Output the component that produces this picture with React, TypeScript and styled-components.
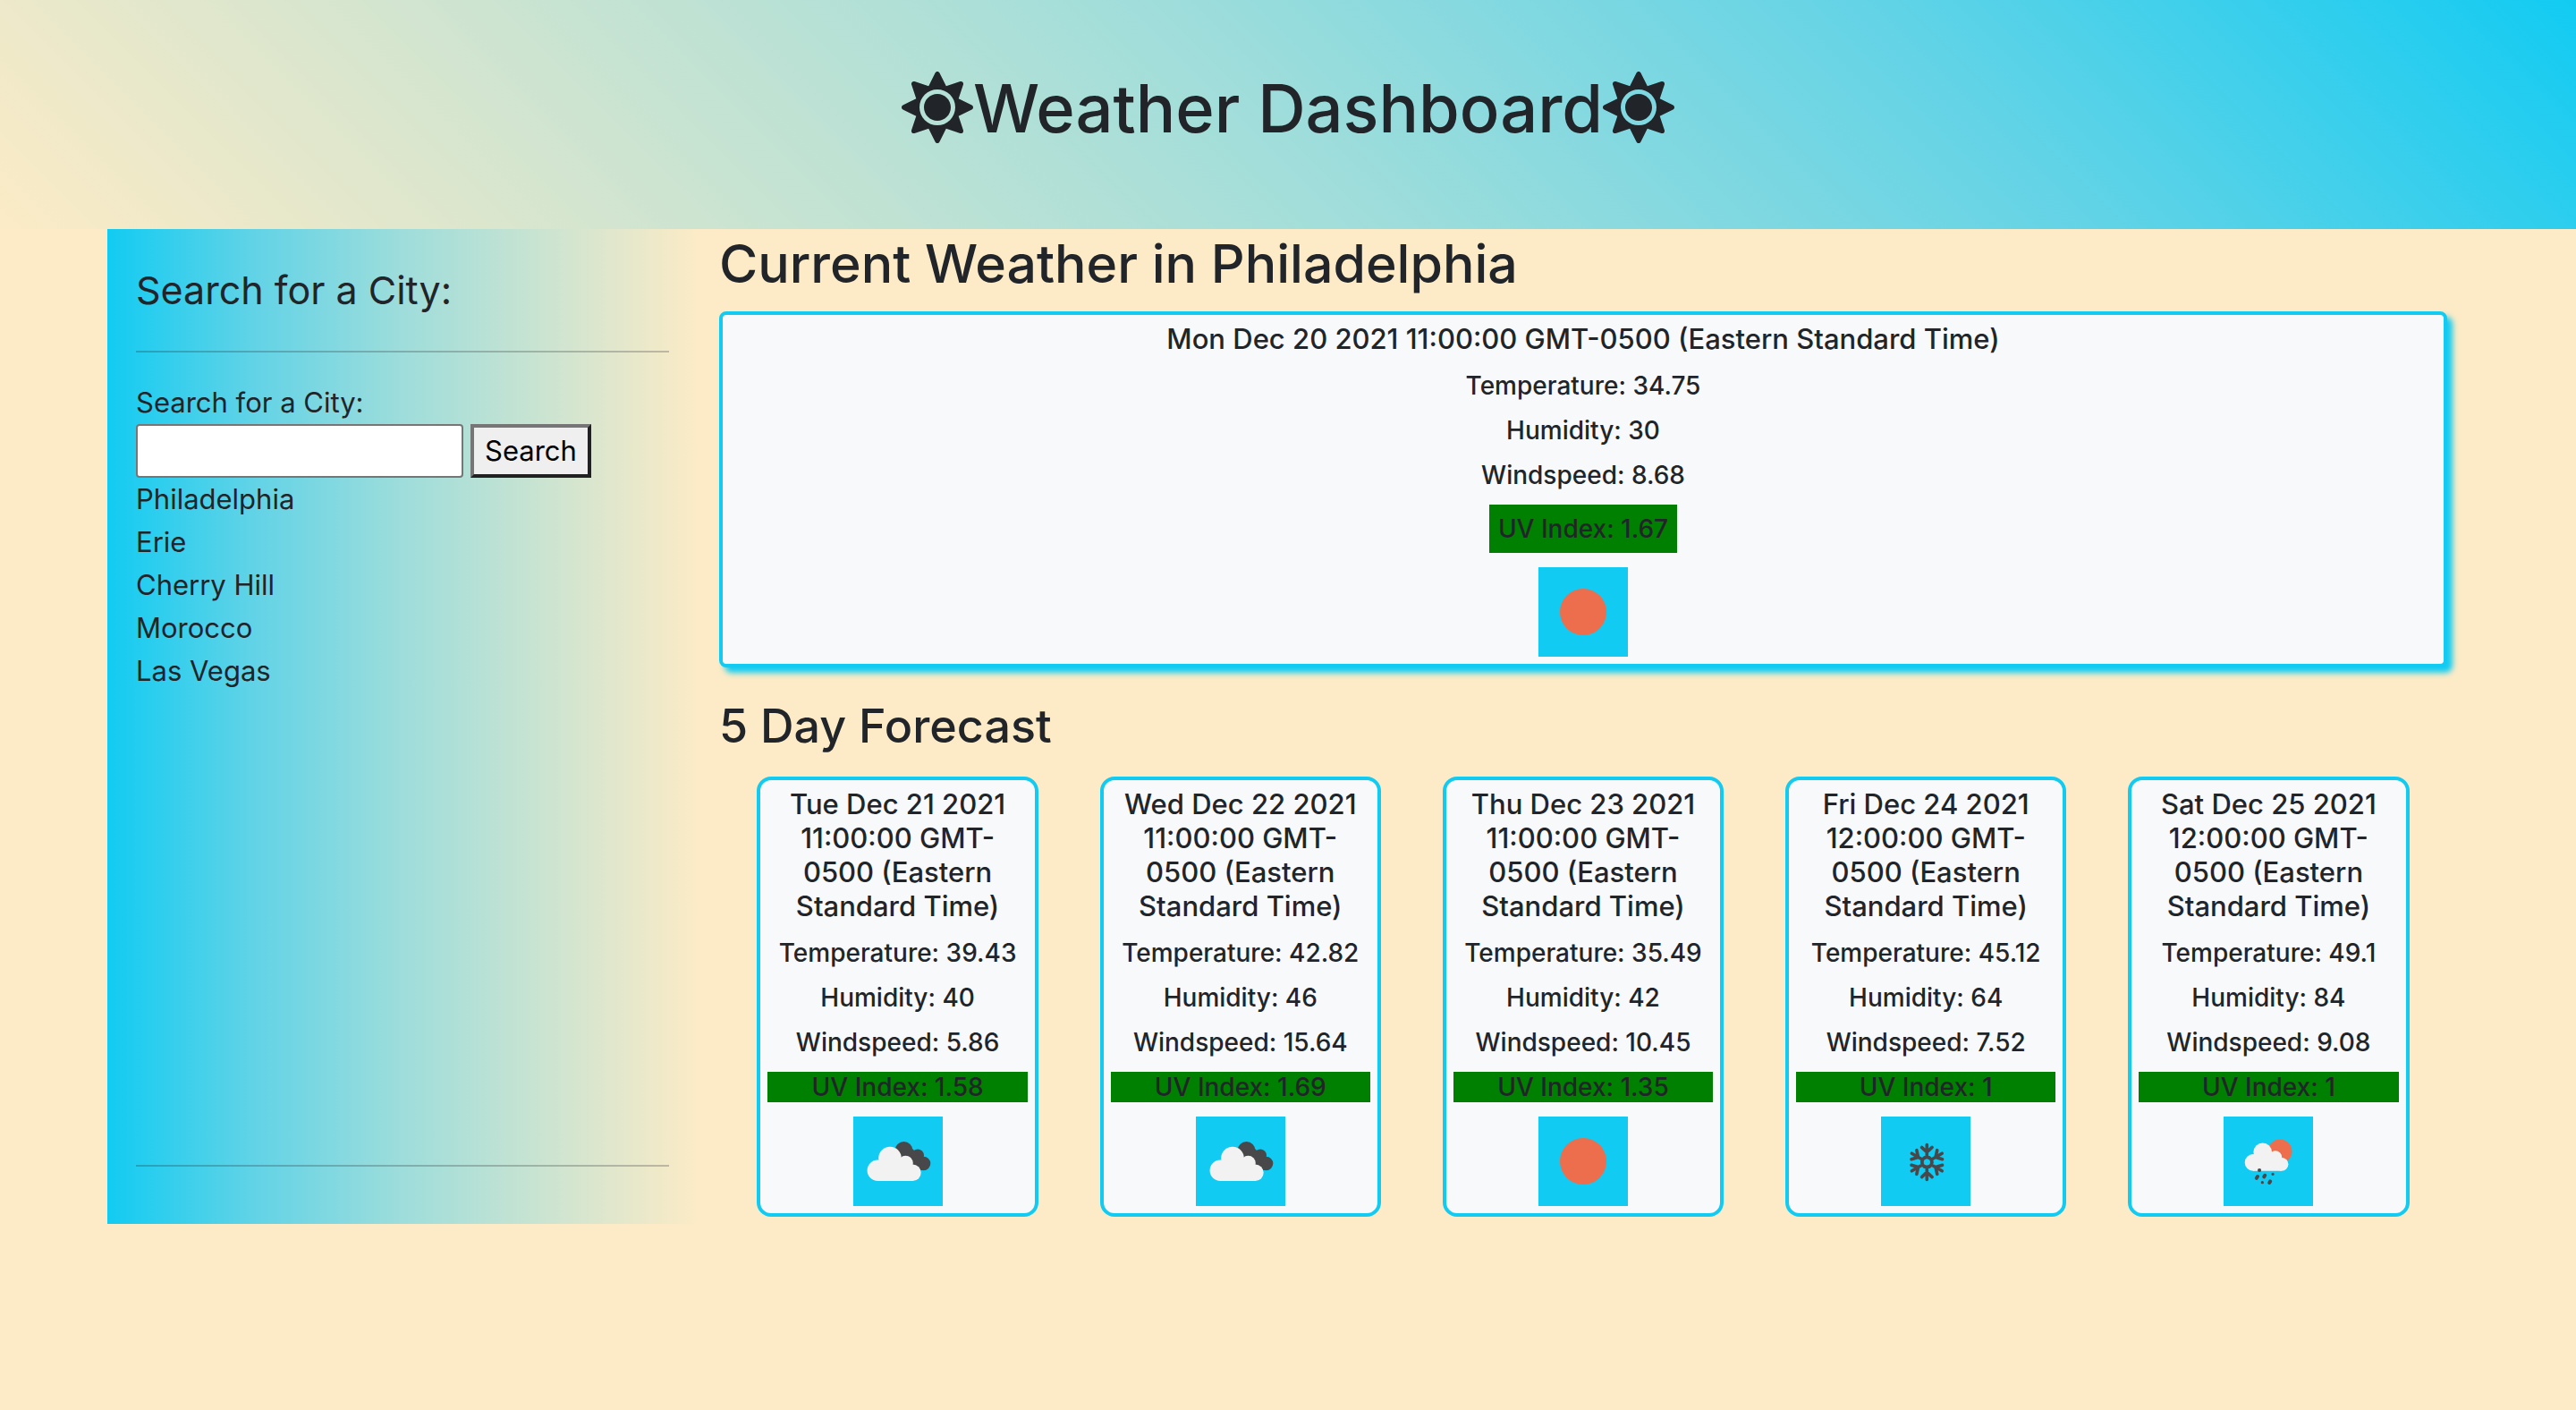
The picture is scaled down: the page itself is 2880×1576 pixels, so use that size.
import React from "react";
import styled, { createGlobalStyle } from "styled-components";
import { FaSun } from "react-icons/fa";

const color = {
  ink: "#212529",
  cyan: "#12cbf2",
  sand: "#fcebc6",
  panel: "#f8f9fb",
  cloud: "#f2f2f2",
  storm: "#48484a",
  sun: "#ec6e4c",
};

const GlobalStyle = createGlobalStyle`
  *, *::before, *::after { box-sizing: border-box; }
  body {
    margin: 0;
    background: ${color.sand};
    color: ${color.ink};
    font-family: Inter, "Liberation Sans", sans-serif;
    font-size: 31px;
    line-height: 48px;
  }
  h1, h2, h3, p, ul { margin: 0; padding: 0; font-weight: 500; }
`;

const Header = styled.header`
  padding: 72px 0 86px;
  background: linear-gradient(45deg, ${color.sand}, #9edddb 50%, #62d3e6 75%, ${color.cyan});
`;

const Title = styled.h1`
  display: flex;
  justify-content: center;
  font-size: 74px;
  line-height: 98px;

  svg { width: 80px; height: 80px; margin-top: 8px; }
`;

const Page = styled.main`
  display: grid;
  grid-template-columns: 1fr 3fr;
  max-width: 2640px;
  margin: 0 auto;
`;

const Sidebar = styled.aside`
  display: flex;
  flex-direction: column;
  padding: 32px;
  background: linear-gradient(to right, ${color.cyan}, #62d3e6 25%, #9edddb 50%, ${color.sand});
`;

const SidebarTitle = styled.h2`
  font-size: 43px;
  line-height: 72px;
  font-weight: 400;
`;

const Rule = styled.hr`
  width: 100%;
  height: 2px;
  margin: 32px 0;
  border: 0;
  background: ${color.ink};
  opacity: 0.25;
`;

const SearchForm = styled.form`
  display: flex;
  flex-wrap: wrap;
  column-gap: 8px;
`;

const SearchLabel = styled.label`
  flex: 0 0 100%;
`;

const SearchInput = styled.input`
  width: 366px;
  height: 60px;
  padding: 4px 8px;
  border: 2px solid #767676;
  border-radius: 4px;
  background: #fff;
  font: inherit;
`;

const SearchButton = styled.button`
  height: 60px;
  padding: 0 12px;
  border: 4px solid;
  border-color: #767676 #212121 #212121 #767676;
  background: #efefef;
  color: #000;
  font: inherit;
`;

const CityList = styled.ul`
  flex: 1;
  list-style: none;
  font-weight: 400;
`;

const Content = styled.section`
  padding: 0 24px;
`;

const CurrentHeading = styled.h2`
  margin-bottom: 14px;
  font-size: 59px;
  line-height: 78px;
`;

const ForecastHeading = styled.h2`
  margin-bottom: 14px;
  font-size: 52px;
  line-height: 68px;
`;

const Card = styled.article`
  display: flex;
  flex-direction: column;
  align-items: center;
  gap: 16px;
  padding: 8px;
  border: 4px solid ${color.cyan};
  background: ${color.panel};
  text-align: center;
`;

const CurrentCard = styled(Card)`
  margin-bottom: 32px;
  border-radius: 8px;
  box-shadow: 6px 6px 6px ${color.cyan};
`;

const DayCard = styled(Card)`
  width: 82%;
  border-radius: 16px;
`;

const Forecast = styled.div`
  display: grid;
  grid-template-columns: repeat(5, 1fr);
  justify-items: center;
  padding: 8px;
`;

const DateLine = styled.h3`
  font-size: 31px;
  line-height: 38px;
`;

const Stat = styled.p`
  font-size: 28px;
  line-height: 34px;
`;

const UvIndex = styled(Stat)<{ $boxed?: boolean }>`
  align-self: ${(p) => (p.$boxed ? "center" : "stretch")};
  padding: ${(p) => (p.$boxed ? "10px" : "0")};
  background: #008000;
`;

const IconTile = styled.svg`
  display: block;
  width: 100px;
  height: 100px;
  background: ${color.cyan};
`;

type Sky = "clear" | "clouds" | "snow" | "rain";

const arms = [0, 60, 120, 180, 240, 300];

function SkyIcon({ sky }: { sky: Sky }) {
  return (
    <IconTile viewBox="0 0 100 100" role="img" aria-label={sky}>
      {sky === "clear" && <circle cx="50" cy="50" r="26" fill={color.sun} />}
      {sky === "clouds" && (
        <>
          <g fill={color.storm}>
            <circle cx="56.5" cy="38" r="10" />
            <circle cx="72" cy="43.5" r="7" />
            <circle cx="78.5" cy="52.5" r="7.8" />
            <path d="M54 44L66 36L79 48L76 60L66 58Z" />
          </g>
          <g fill={color.cloud}>
            <circle cx="27.3" cy="60.3" r="11.7" />
            <circle cx="41" cy="46.5" r="12.8" />
            <circle cx="58.5" cy="52" r="8.3" />
            <circle cx="66.5" cy="62.8" r="9.2" />
            <path d="M27 72V56L41 50H58L67 60V72Z" />
          </g>
        </>
      )}
      {sky === "snow" && (
        <g stroke={color.storm} strokeWidth="3.6" strokeLinecap="round" fill="none">
          {arms.map((a) => (
            <path
              key={a}
              transform={`rotate(${a} 51.3 51)`}
              d="M51.3 45.5V31.5M45.5 34.4L51.3 39.8L57.1 34.4M48.5 46.2L51.3 45.2L54.1 46.2"
            />
          ))}
        </g>
      )}
      {sky === "rain" && (
        <>
          <circle cx="63" cy="39" r="13.5" fill={color.sun} />
          <g fill={color.cloud}>
            <circle cx="33" cy="51.4" r="9.3" />
            <circle cx="43.7" cy="39.8" r="10.3" />
            <circle cx="58" cy="45.5" r="7.2" />
            <circle cx="65" cy="53.3" r="7.4" />
            <path d="M33 60.7V48L44 43H58L65 52V60.7Z" />
          </g>
          <g stroke={color.storm} strokeWidth="4" strokeLinecap="round">
            <path d="M40 60h.1M36.8 68.8l1.2-1.8M45.2 67.4l1-1.6M51.2 74l1-1.6" />
            <path strokeWidth="3.2" d="M55 64.3h.1M43.3 73.7h.1" />
          </g>
        </>
      )}
    </IconTile>
  );
}

interface Reading {
  date: string;
  temperature: string;
  humidity: string;
  wind: string;
  uv: string;
  sky: Sky;
}

const today: Reading = {
  date: "Mon Dec 20 2021 11:00:00 GMT-0500 (Eastern Standard Time)",
  temperature: "34.75",
  humidity: "30",
  wind: "8.68",
  uv: "1.67",
  sky: "clear",
};

const days: Reading[] = [
  { date: "Tue Dec 21 2021 11:00:00 GMT-0500 (Eastern Standard Time)", temperature: "39.43", humidity: "40", wind: "5.86", uv: "1.58", sky: "clouds" },
  { date: "Wed Dec 22 2021 11:00:00 GMT-0500 (Eastern Standard Time)", temperature: "42.82", humidity: "46", wind: "15.64", uv: "1.69", sky: "clouds" },
  { date: "Thu Dec 23 2021 11:00:00 GMT-0500 (Eastern Standard Time)", temperature: "35.49", humidity: "42", wind: "10.45", uv: "1.35", sky: "clear" },
  { date: "Fri Dec 24 2021 12:00:00 GMT-0500 (Eastern Standard Time)", temperature: "45.12", humidity: "64", wind: "7.52", uv: "1", sky: "snow" },
  { date: "Sat Dec 25 2021 12:00:00 GMT-0500 (Eastern Standard Time)", temperature: "49.1", humidity: "84", wind: "9.08", uv: "1", sky: "rain" },
];

const cities = ["Philadelphia", "Erie", "Cherry Hill", "Morocco", "Las Vegas"];

function Readings({ reading, boxed }: { reading: Reading; boxed?: boolean }) {
  return (
    <>
      <DateLine>{reading.date}</DateLine>
      <Stat>Temperature: {reading.temperature}</Stat>
      <Stat>Humidity: {reading.humidity}</Stat>
      <Stat>Windspeed: {reading.wind}</Stat>
      <UvIndex $boxed={boxed}>UV Index: {reading.uv}</UvIndex>
      <SkyIcon sky={reading.sky} />
    </>
  );
}

export default function App() {
  return (
    <>
      <GlobalStyle />
      <Header>
        <Title>
          <FaSun />
          Weather Dashboard
          <FaSun />
        </Title>
      </Header>
      <Page>
        <Sidebar>
          <SidebarTitle>Search for a City:</SidebarTitle>
          <Rule />
          <SearchForm onSubmit={(e) => e.preventDefault()}>
            <SearchLabel htmlFor="city">Search for a City:</SearchLabel>
            <SearchInput id="city" type="text" />
            <SearchButton type="submit">Search</SearchButton>
          </SearchForm>
          <CityList>
            {cities.map((city) => (
              <li key={city}>{city}</li>
            ))}
          </CityList>
          <Rule />
        </Sidebar>
        <Content>
          <CurrentHeading>Current Weather in Philadelphia</CurrentHeading>
          <CurrentCard>
            <Readings reading={today} boxed />
          </CurrentCard>
          <ForecastHeading>5 Day Forecast</ForecastHeading>
          <Forecast>
            {days.map((day) => (
              <DayCard key={day.date}>
                <Readings reading={day} />
              </DayCard>
            ))}
          </Forecast>
        </Content>
      </Page>
    </>
  );
}
